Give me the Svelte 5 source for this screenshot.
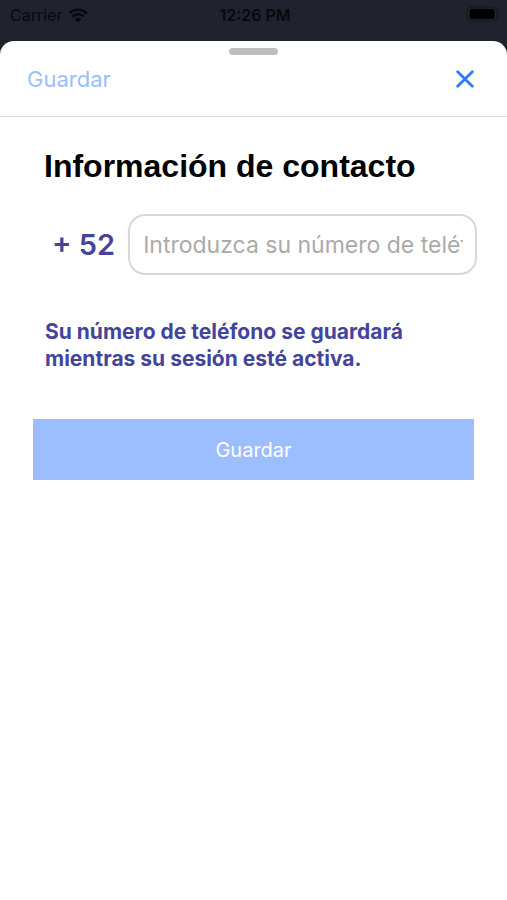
<script>
  let phone = $state('');
</script>

<div class="screen">
  <div class="status">
    <div class="carrier">
      <span>Carrier</span>
      <svg width="20" height="15" viewBox="0 0 20 15" aria-hidden="true">
        <path d="M1.2 5.4a12.6 12.6 0 0 1 17.6 0M4.3 8.6a8.2 8.2 0 0 1 11.4 0" fill="none" stroke="currentColor" stroke-width="2.6" />
        <path d="M6.7 11.1a4.7 4.7 0 0 1 6.6 0L10 14.4z" fill="currentColor" />
      </svg>
    </div>
    <time>12:26 PM</time>
    <svg class="battery" width="34" height="16" viewBox="0 0 34 16" aria-hidden="true">
      <rect x="1" y="1" width="30" height="14" rx="4.5" fill="none" stroke="#191b23" stroke-width="1.4" />
      <rect x="3.6" y="3" width="25" height="10" rx="2.5" fill="#000" />
      <path d="M32.3 5.5q1.8 2.5 0 5z" fill="#14151c" />
    </svg>
  </div>

  <main class="sheet">
    <div class="grabber"></div>
    <header>
      <button type="button" class="save-link">Guardar</button>
      <button type="button" class="close" aria-label="Cerrar">
        <svg width="18" height="18" viewBox="0 0 18 18" aria-hidden="true">
          <path d="M1.7 1.7 16.3 16.3M16.3 1.7 1.7 16.3" stroke="#2f7bf6" stroke-width="2.8" stroke-linecap="round" />
        </svg>
      </button>
    </header>
    <form onsubmit={(e) => e.preventDefault()}>
      <h1>Información de contacto</h1>
      <div class="row">
        <label for="phone">+ 52</label>
        <input id="phone" type="tel" bind:value={phone} placeholder="Introduzca su número de teléfono" />
      </div>
      <p>Su número de teléfono se guardará mientras su sesión esté activa.</p>
      <button type="submit" class="submit">Guardar</button>
    </form>
  </main>
</div>

<style>
  .screen {
    min-height: 100vh;
    display: flex;
    flex-direction: column;
    background: #20222d;
    font-family: Inter, "Liberation Sans", sans-serif;
  }
  .status {
    height: 41px;
    box-sizing: border-box;
    padding: 6px 7px 0 10px;
    display: grid;
    grid-template-columns: 1fr auto 1fr;
    align-items: start;
    color: #08090d;
    font-size: 16px;
    line-height: 18px;
  }
  .carrier {
    display: flex;
    align-items: center;
    gap: 6px;
  }
  time {
    font-weight: 600;
  }
  .battery {
    justify-self: end;
  }
  .sheet {
    flex: 1;
    padding-top: 7px;
    background: #fff;
    border-radius: 14px 14px 0 0;
  }
  .grabber {
    width: 49px;
    height: 7px;
    margin: 0 auto;
    border-radius: 4px;
    background: #bebebe;
  }
  button {
    border: 0;
    padding: 0;
    background: none;
    font-family: inherit;
    cursor: pointer;
  }
  header {
    display: flex;
    align-items: center;
    justify-content: space-between;
    height: 62px;
    padding: 0 33px 13px 27px;
    box-sizing: border-box;
    border-bottom: 1px solid #dedede;
  }
  .save-link {
    color: #9dbefe;
    font-size: 22px;
    line-height: 28px;
  }
  .close {
    display: flex;
  }
  form {
    padding: 29px 30px 0 33px;
  }
  h1 {
    margin: 0 0 28px 11px;
    font: bold 32px/40px "Liberation Sans", Arial, sans-serif;
    color: #000;
  }
  .row {
    display: flex;
    align-items: center;
    gap: 13px;
    padding-left: 19px;
  }
  label {
    flex: none;
    color: #44459a;
    font-size: 29px;
    font-weight: 600;
  }
  input {
    flex: 1;
    min-width: 0;
    height: 61px;
    box-sizing: border-box;
    padding: 0 12px 0 13px;
    border: 2px solid #d8d8d8;
    border-radius: 17px;
    background: #fff;
    color: #222;
    font-family: inherit;
    font-size: 23px;
  }
  input::placeholder {
    color: #aaa;
    opacity: 1;
  }
  p {
    margin: 43px 40px 47px 12px;
    color: #44459a;
    font-size: 21px;
    line-height: 27px;
    font-weight: 700;
  }
  .submit {
    display: block;
    width: calc(100% - 3px);
    height: 61px;
    background: #9dbefe;
    color: #fff;
    font-size: 20px;
  }
</style>
